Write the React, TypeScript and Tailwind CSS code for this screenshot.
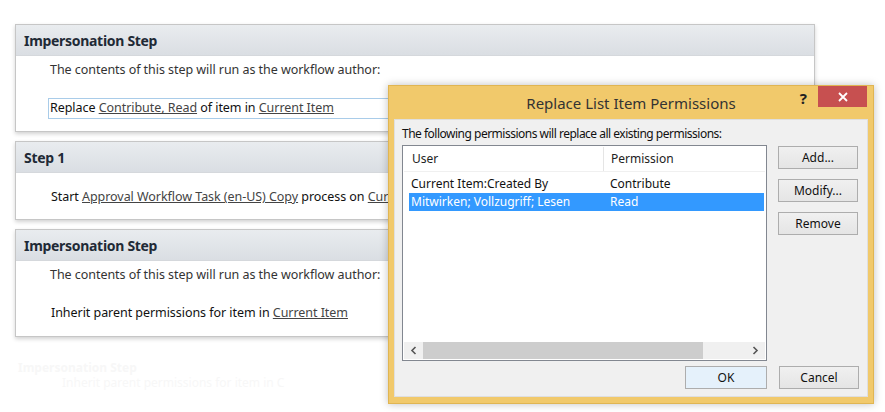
const font = { fontFamily: '"Segoe UI", "Noto Sans", "Open Sans", sans-serif' };

function Panel({ title, children, h }: { title: string; children: React.ReactNode; h: string }) {
  return (
    <div className={`w-[800px] ${h} border border-[#c6c6c6] bg-white shadow-[0_2px_4px_rgba(0,0,0,0.18)] flex flex-col`}>
      <div className="h-[31px] shrink-0 bg-gradient-to-b from-[#e9ecef] to-[#dadee3] border-b border-[#d5d8dc] flex items-center pl-[8px]">
        <span className="text-[14px] font-bold text-[#1f2a36] tracking-[-0.3px]">{title}</span>
      </div>
      <div className="flex-1 pl-[34px] text-[12.5px] text-[#333] tracking-[-0.05px]">{children}</div>
    </div>
  );
}

function Btn({ label, cls = "" }: { label: string; cls?: string }) {
  return (
    <div className={`w-[80px] h-[23px] border border-[#adadad] bg-gradient-to-b from-[#f0f0f0] to-[#e5e5e5] flex items-center justify-center text-[12px] text-[#111] ${cls}`}>
      {label}
    </div>
  );
}

export default function App() {
  return (
    <div className="relative w-[885px] h-[412px] bg-white overflow-hidden" style={font}>
      <div className="flex flex-col gap-[9px] pt-[24px] pl-[15px]">
        <Panel title="Impersonation Step" h="h-[108px]">
          <div className="pt-[5px] leading-[18px]">The contents of this step will run as the workflow author:</div>
          <div className="mt-[19px] -ml-[2px] h-[21px] border border-[#a9cce9] flex items-center pl-[1px] text-[#111]">
            Replace&nbsp;<span className="underline text-[#444]">Contribute, Read</span>&nbsp;of item in&nbsp;<span className="underline text-[#444]">Current Item</span>
          </div>
        </Panel>
        <Panel title="Step 1" h="h-[79px]">
          <div className="pt-[15px] pl-[1px] text-[#111]">
            Start <span className="underline text-[#444]">Approval Workflow Task (en-US) Copy</span> process on <span className="underline text-[#444]">Current Item</span>
          </div>
        </Panel>
        <Panel title="Impersonation Step" h="h-[108px]">
          <div className="pt-[5px] leading-[18px]">The contents of this step will run as the workflow author:</div>
          <div className="mt-[20px] pl-[1px] text-[#111]">
            Inherit parent permissions for item in <span className="underline text-[#444]">Current Item</span>
          </div>
        </Panel>
      </div>
      <div className="absolute left-[18px] top-[361px] text-[12px] leading-[13px] text-[#f7f7f7] font-bold">Impersonation Step</div>
      <div className="absolute left-[62px] top-[376px] text-[12px] leading-[13px] text-[#f7f7f7]">Inherit parent permissions for item in C</div>

      {/* Dialog */}
      <div className="absolute left-[388px] top-[85px] w-[486px] h-[319px] bg-[#f1c96b] border border-[#e0b552] shadow-[0_0_8px_rgba(0,0,0,0.25)] flex flex-col px-[5px] pb-[6px]">
        <div className="h-[33px] shrink-0 relative flex items-center justify-center">
          <span className="text-[15px] text-[#333] pt-[1px]">Replace List Item Permissions</span>
          <span className="absolute right-[61px] top-[1px] text-[15px] font-bold text-[#222]">?</span>
          <div className="absolute right-[1px] top-0 w-[49px] h-[21px] bg-[#c75050] flex items-center justify-center">
            <svg width="10" height="10" viewBox="0 0 10 10">
              <path d="M1 1 L9 9 M9 1 L1 9" stroke="white" strokeWidth="1.8" />
            </svg>
          </div>
        </div>
        <div className="flex-1 bg-[#f0f0f0] border border-[#dfdfdf] relative pl-[7px] pr-[8px]">
          <div className="text-[12px] text-[#111] pt-[6px] leading-[16px] tracking-[-0.5px]">The following permissions will replace all existing permissions:</div>
          <div className="flex mt-[3px] gap-[11px]">
            <div className="w-[365px] h-[216px] border border-[#828790] bg-white flex flex-col p-[1px]">
              <div className="h-[25px] flex items-center text-[12px] leading-[16px] text-[#222] border-b border-[#f0f0f0]">
                <div className="w-[200px] pl-[8px] h-full flex items-center border-r border-[#e5e5e5]">User</div>
                <div className="pl-[7px]">Permission</div>
              </div>
              <div className="pl-[5px] pr-[1px] pt-[3px] text-[12px] leading-[16px]">
                <div className="flex h-[18px] items-center text-[#111]">
                  <div className="w-[200px] pl-[2px]">Current Item:Created By</div>
                  <div className="pl-[1px]">Contribute</div>
                </div>
                <div className="flex h-[18px] items-center text-white bg-[#3399ff]">
                  <div className="w-[200px] pl-[2px]">Mitwirken; Vollzugriff; Lesen</div>
                  <div className="pl-[1px]">Read</div>
                </div>
              </div>
              <div className="flex-1" />
              <div className="h-[17px] bg-[#f0f0f0] flex items-center">
                <div className="w-[19px] flex justify-center">
                  <svg width="7" height="9" viewBox="0 0 7 9"><path d="M5.5 1 L2 4.5 L5.5 8" stroke="#555" strokeWidth="1.6" fill="none" /></svg>
                </div>
                <div className="w-[280px] h-[17px] bg-[#cdcdcd]" />
                <div className="flex-1" />
                <div className="w-[19px] flex justify-center">
                  <svg width="7" height="9" viewBox="0 0 7 9"><path d="M1.5 1 L5 4.5 L1.5 8" stroke="#555" strokeWidth="1.6" fill="none" /></svg>
                </div>
              </div>
            </div>
            <div className="flex flex-col gap-[10px] pt-[1px]">
              <Btn label="Add..." />
              <Btn label="Modify..." />
              <Btn label="Remove" />
            </div>
          </div>
          <div className="flex justify-end gap-[12px] mt-[5px]">
            <Btn label="OK" cls="w-[82px] border-[#3c9be8] bg-none bg-[#e5f1fb]" />
            <Btn label="Cancel" />
          </div>
        </div>
      </div>
    </div>
  );
}
